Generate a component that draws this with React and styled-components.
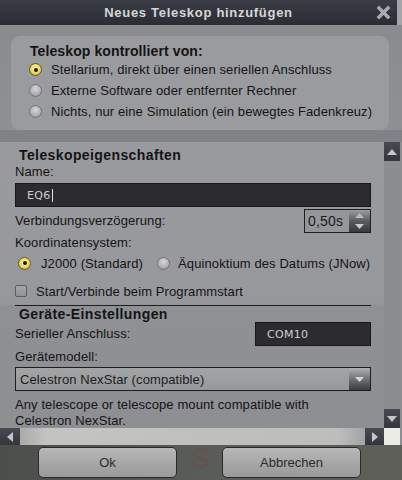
import React from "react"
import styled, { createGlobalStyle } from "styled-components"

const GlobalStyle = createGlobalStyle`
  html, body {
    margin: 0;
    padding: 0;
    background: #8d8e92;
  }
  body {
    font-family: "Liberation Sans", Arial, sans-serif;
    font-size: 13px;
    color: #141414;
  }
`

const Dialog = styled.div`
  position: relative;
  width: 402px;
  height: 480px;
  display: flex;
  flex-direction: column;
  overflow: hidden;
  background: #8d8e92;
`

const TitleBar = styled.div`
  height: 25px;
  flex: none;
  display: flex;
  align-items: center;
  justify-content: center;
  background: linear-gradient(#3a3d45, #2a2d34);
  border-right: 5px solid #a3a5a8;
  position: relative;
`

const Title = styled.div`
  font-weight: bold;
  font-size: 13px;
  letter-spacing: 0.7px;
  color: #d6d6d6;
`

const CloseButton = styled.div`
  position: absolute;
  right: 6px;
  top: 5px;
  width: 15px;
  height: 15px;
  display: flex;
  filter: blur(0.5px);
`

const TopSection = styled.div`
  flex: none;
  padding: 11px 13px 0 11px;
  background: linear-gradient(#8a8b8f, #8f9094);
`

const GroupBox = styled.div`
  height: 94px;
  box-sizing: border-box;
  padding: 7px 0 0 18px;
  border-radius: 9px;
  background: #9a9b9e;
`

const GroupTitle = styled.div`
  font-weight: bold;
  font-size: 14px;
  line-height: 17px;
  letter-spacing: 0.1px;
  padding-left: 1px;
  margin-bottom: -1px;
`

const Gap = styled.div`
  height: 12px;
  flex: none;
  background: #818286;
`

const OptionRow = styled.label`
  display: flex;
  align-items: center;
  gap: ${(p) => p.$gap || 9}px;
  height: ${(p) => p.$h || 21}px;
  margin-top: ${(p) => p.$mt || 0}px;
  font-size: 13px;
  letter-spacing: 0.1px;
  white-space: nowrap;
`

const Radio = styled.span`
  flex: none;
  width: 13px;
  height: 13px;
  border-radius: 50%;
  box-sizing: border-box;
  border: 1px solid ${(p) => (p.$checked ? "#6a5a22" : "#747474")};
  background: ${(p) =>
    p.$checked
      ? "radial-gradient(circle at 50% 40%, #fff4a8 0%, #f0d65a 55%, #b8942a 100%)"
      : "radial-gradient(circle at 50% 35%, #d6d6d6 0%, #b0b0b0 60%, #8c8c8c 100%)"};
  display: flex;
  align-items: center;
  justify-content: center;
  &::after {
    content: "";
    width: 4px;
    height: 4px;
    border-radius: 50%;
    background: #1a1a1a;
    display: ${(p) => (p.$checked ? "block" : "none")};
  }
`

const ScrollArea = styled.div`
  flex: none;
  height: 303px;
  display: grid;
  grid-template-columns: 384px 16px 2px;
  grid-template-rows: 286px 17px;
`

const Viewport = styled.div`
  overflow: hidden;
  background: linear-gradient(#999a9e 0px, #97989c 162px, #8f9094 163px, #8e8f93 100%);
  padding: 3px 13px 0 15px;
`

const VScroll = styled.div`
  display: flex;
  flex-direction: column;
  justify-content: space-between;
  background: #8c8d91;
`

const ArrowButton = styled.div`
  height: ${(p) => p.$h || 19}px;
  width: ${(p) => p.$w || 16}px;
  display: flex;
  align-items: center;
  justify-content: center;
  background: linear-gradient(#474a51, #33363c);
  flex: none;
`

const Filler = styled.div`
  background: #8d8e92;
`

const HScroll = styled.div`
  grid-column: 1 / 2;
  display: flex;
  background: #8e8f93;
`

const HTrack = styled.div`
  flex: 1;
  background: linear-gradient(90deg, #a9aaa9 0%, #c4c5c3 8%, #c0c1bf 50%, #bdbebc 92%, #a2a3a4 100%);
  filter: blur(0.6px);
`

const Corner = styled.div`
  background: #ecece6;
`

const Heading = styled.div`
  font-weight: bold;
  font-size: 14px;
  line-height: ${(p) => p.$lh || 20}px;
  letter-spacing: 0.4px;
  padding-left: 4px;
`

const Label = styled.div`
  font-size: 13px;
  letter-spacing: 0.1px;
  line-height: ${(p) => p.$lh || 16}px;
  margin-top: ${(p) => p.$mt || 0}px;
  white-space: nowrap;
`

const TextField = styled.div`
  box-sizing: border-box;
  height: 24px;
  width: ${(p) => p.$w || "100%"};
  margin-top: ${(p) => p.$mt || 0}px;
  background: #2c2c30;
  border: 1px solid #18181a;
  color: #cfcfcf;
  font-family: "DejaVu Sans", sans-serif;
  font-size: 11px;
  letter-spacing: 0.3px;
  display: flex;
  align-items: center;
  padding-left: 11px;
`

const Caret = styled.span`
  display: inline-block;
  width: 1px;
  height: 13px;
  background: #e0e0e0;
  margin-left: 1px;
`

const FieldRow = styled.div`
  display: flex;
  align-items: center;
  justify-content: space-between;
  height: 24px;
  margin-top: ${(p) => p.$mt || 0}px;
`

const SpinBox = styled.div`
  box-sizing: border-box;
  width: 67px;
  height: 24px;
  border: 1px solid #1e1e1e;
  display: flex;
  background: #95969a;
`

const SpinValue = styled.div`
  flex: 1;
  display: flex;
  align-items: center;
  padding-left: 3px;
  font-size: 14px;
  letter-spacing: 0.2px;
  color: #1c1c1c;
`

const SpinArrows = styled.div`
  width: 21px;
  display: flex;
  flex-direction: column;
  align-items: center;
  justify-content: space-around;
  background: linear-gradient(#9b9c9e, #5a5b5e 50%, #38393c);
`

const RadioRow = styled.div`
  display: flex;
  align-items: center;
  height: 20px;
  margin-top: 1px;
  padding-left: 3px;
  gap: 14px;
`

const Check = styled.span`
  flex: none;
  width: 12px;
  height: 12px;
  box-sizing: border-box;
  border: 1px solid #5c5c5c;
  border-radius: 2px;
  background: linear-gradient(#a4a5a7, #929396);
`

const Divider = styled.div`
  height: 1px;
  background: #1f1f21;
  margin-top: 4px;
`

const Select = styled.div`
  box-sizing: border-box;
  height: 24px;
  border: 1px solid #1e1e1e;
  display: flex;
  background: linear-gradient(#a3a4a6, #97989a);
`

const SelectValue = styled.div`
  flex: 1;
  display: flex;
  align-items: center;
  padding-left: 4px;
  font-size: 13px;
  letter-spacing: 0.1px;
  color: #1c1c1c;
`

const SelectArrow = styled.div`
  width: 21px;
  display: flex;
  align-items: center;
  justify-content: center;
  background: linear-gradient(#b0b1b3, #6a6b6e 55%, #3b3c3f);
`

const Description = styled.div`
  font-size: 13px;
  letter-spacing: 0.1px;
  line-height: 16px;
  margin-top: 6px;
`

const ButtonBar = styled.div`
  flex: 1;
  display: flex;
  align-items: flex-start;
  padding: 2px 0 0 38px;
  gap: 45px;
  background: linear-gradient(90deg, #4c4e4c 0%, #5a5c59 50%, #5d5f58 100%);
  position: relative;
`

const Button = styled.div`
  box-sizing: border-box;
  width: 139px;
  height: 31px;
  border: 1px solid #2a2a2a;
  border-radius: 5px;
  background: linear-gradient(#b7b8b7, #a3a4a3 60%, #999a99);
  display: flex;
  align-items: center;
  justify-content: center;
  font-size: 13px;
  color: #2c2c2c;
`

const GhostLetter = styled.div`
  position: absolute;
  left: 192px;
  top: 1px;
  font-size: 27px;
  line-height: 27px;
  color: rgba(160, 40, 40, 0.22);
  pointer-events: none;
`

const Triangle = ({ dir = "up", color = "#c8c9cc", w = 9, h = 5 }) => (
  <svg width={w} height={h} viewBox={`0 0 ${w} ${h}`}>
    {dir === "up" && <polygon points={`0,${h} ${w / 2},0 ${w},${h}`} fill={color} />}
    {dir === "down" && <polygon points={`0,0 ${w},0 ${w / 2},${h}`} fill={color} />}
    {dir === "left" && <polygon points={`${w},0 ${w},${h} 0,${h / 2}`} fill={color} />}
    {dir === "right" && <polygon points={`0,0 0,${h} ${w},${h / 2}`} fill={color} />}
  </svg>
)

const App = () => {
  return (
    <>
      <GlobalStyle />
      <Dialog>
        <TitleBar>
          <Title>Neues Teleskop hinzufügen</Title>
          <CloseButton>
            <svg width="15" height="15" viewBox="0 0 15 15">
              <path d="M3 3 L12 12 M12 3 L3 12" stroke="#a9aaad" strokeWidth="3.4" strokeLinecap="square" />
            </svg>
          </CloseButton>
        </TitleBar>

        <TopSection>
          <GroupBox>
            <GroupTitle>Teleskop kontrolliert von:</GroupTitle>
            <OptionRow>
              <Radio $checked />
              Stellarium, direkt über einen seriellen Anschluss
            </OptionRow>
            <OptionRow>
              <Radio />
              Externe Software oder entfernter Rechner
            </OptionRow>
            <OptionRow>
              <Radio />
              Nichts, nur eine Simulation (ein bewegtes Fadenkreuz)
            </OptionRow>
          </GroupBox>
        </TopSection>
        <Gap />

        <ScrollArea>
          <Viewport>
            <Heading>Teleskopeigenschaften</Heading>
            <Label $lh={14}>Name:</Label>
            <TextField $mt={4}>
              EQ6<Caret />
            </TextField>
            <FieldRow $mt={2}>
              <Label>Verbindungsverzögerung:</Label>
              <SpinBox>
                <SpinValue>0,50s</SpinValue>
                <SpinArrows>
                  <Triangle dir="up" color="#b9babc" />
                  <Triangle dir="down" color="#c9cacc" />
                </SpinArrows>
              </SpinBox>
            </FieldRow>
            <Label $lh={18} $mt={1}>Koordinatensystem:</Label>
            <RadioRow>
              <OptionRow $h={20} $gap={10}>
                <Radio $checked />
                J2000 (Standard)
              </OptionRow>
              <OptionRow $h={20} $gap={8}>
                <Radio />
                Äquinoktium des Datums (JNow)
              </OptionRow>
            </RadioRow>
            <OptionRow $h={20} $mt={8} $gap={9}>
              <Check />
              Start/Verbinde beim Programmstart
            </OptionRow>
            <Divider />
            <Heading $lh={16}>Geräte-Einstellungen</Heading>
            <FieldRow>
              <Label>Serieller Anschluss:</Label>
              <TextField $w="116px">COM10</TextField>
            </FieldRow>
            <Label $lh={20} $mt={1}>Gerätemodell:</Label>
            <Select>
              <SelectValue>Celestron NexStar (compatible)</SelectValue>
              <SelectArrow>
                <Triangle dir="down" color="#d4d5d7" />
              </SelectArrow>
            </Select>
            <Description>
              Any telescope or telescope mount compatible with
              <br />
              Celestron NexStar.
            </Description>
          </Viewport>
          <VScroll>
            <ArrowButton>
              <Triangle dir="up" color="#c4c5c8" w={10} h={6} />
            </ArrowButton>
            <ArrowButton>
              <Triangle dir="down" color="#c4c5c8" w={10} h={6} />
            </ArrowButton>
          </VScroll>
          <Filler />
          <HScroll>
            <ArrowButton $w={20} $h={17}>
              <Triangle dir="left" color="#c4c5c8" w={6} h={10} />
            </ArrowButton>
            <HTrack />
            <ArrowButton $w={19} $h={17}>
              <Triangle dir="right" color="#c4c5c8" w={6} h={10} />
            </ArrowButton>
          </HScroll>
          <Corner />
          <Filler />
        </ScrollArea>

        <ButtonBar>
          <Button>Ok</Button>
          <GhostLetter>S</GhostLetter>
          <Button>Abbrechen</Button>
        </ButtonBar>
      </Dialog>
    </>
  )
}

export default App
